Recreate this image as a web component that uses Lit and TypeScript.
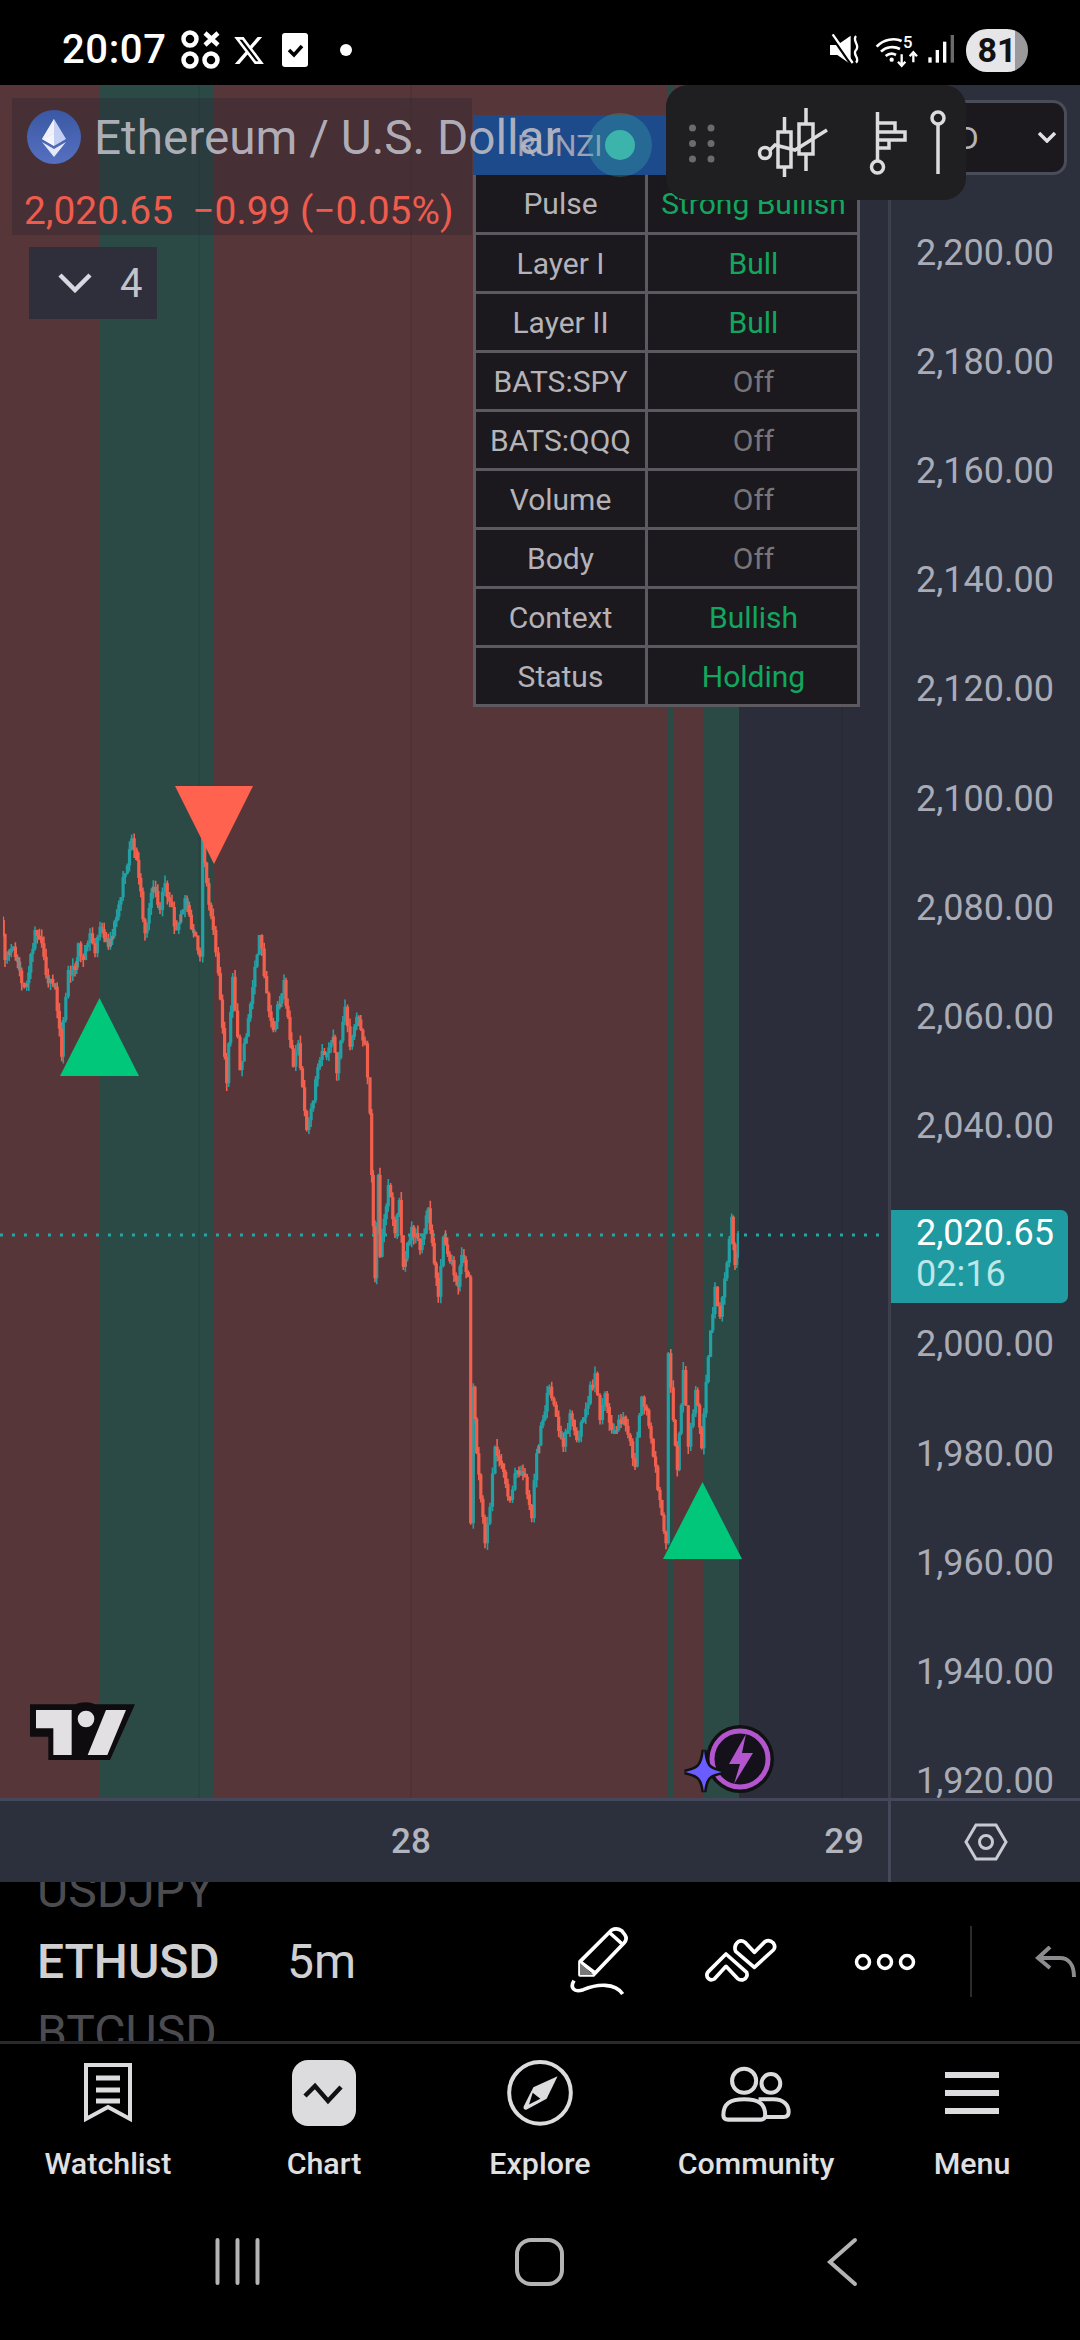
import { LitElement, html, css } from "lit";
import { customElement } from "lit/decorators.js";

const Z4: number[][] = [[5,420],[15,540],[40,500],[65,610],[80,610],[105,450],[125,490],[145,610],[165,620],[185,830],[190,720],[205,570],[225,570],[235,490],[250,540],[270,460],[285,520],[300,440],[325,500],[350,410],[395,175],[410,240],[435,460],[460,320],[480,390],[495,310],[530,450],[555,355],[600,530],[608,160],[620,310],[640,450],[655,580],[680,910],[698,590],[720,870],[745,715],[778,465],[800,640],[820,750],[852,600],[870,780],[880,860],[895,790],[920,1050],[960,840],[1000,770],[1010,880],[1035,680],[1050,800],[1070,710],[1095,790],[1110,1000]];
const Z5: number[][] = [[95,165],[105,475],[115,165],[120,410],[145,195],[165,340],[178,240],[190,440],[215,320],[240,390],[265,265],[295,530],[310,350],[355,500],[365,405],[385,470],[392,1210],[400,800],[410,1000],[435,1270],[450,1160],[465,980],[510,1140],[525,1060],[555,1070],[575,1195],[590,1000],[628,800],[670,980],[690,880],[710,960],[765,760],[780,900],[795,820],[815,930],[850,890],[885,1040],[905,830],[920,870],[960,1140],[978,1270],[985,700],[1000,900],[1012,1050],[1030,750],[1045,980],[1067,810],[1085,985],[1105,710],[1125,500],[1140,590],[1175,290],[1185,435],[1195,340]];

const POINTS = [
  ...Z4.map(([x, y]) => [x / 3, 780 + y / 3 - 86]),
  ...Z5.map(([x, y]) => [340 + x / 3, 1120 + y / 3 - 86]),
];

function buildCandles() {
  let seed = 11;
  const rnd = () => ((seed = (seed * 16807) % 2147483647) / 2147483647);
  const d = { upW: "", upB: "", dnW: "", dnB: "", gr: "" };
  let prev = POINTS[0][1];
  for (let i = 1; i < POINTS.length; i++) {
    const [x0, y0] = POINTS[i - 1];
    const [x1, y1] = POINTS[i];
    const n = Math.max(1, Math.round((x1 - x0) / 2.2));
    for (let k = 1; k <= n; k++) {
      const x = +(x0 + ((x1 - x0) * k) / n).toFixed(1);
      const c = y0 + ((y1 - y0) * k) / n + (k === n ? 0 : (rnd() - 0.5) * 12);
      const top = Math.min(prev, c);
      const bot = Math.max(prev, c);
      const hi = (top - rnd() * 8).toFixed(1);
      const lo = (bot + rnd() * 8).toFixed(1);
      const up = c < prev;
      const body = `M${x} ${top.toFixed(1)}V${Math.max(bot, top + 4).toFixed(1)}`;
      const wick = `M${x} ${hi}V${lo}`;
      if (up) d.upW += wick;
      else d.dnW += wick;
      if (bot - top < 9 && rnd() < 0.3) d.gr += body;
      else if (up) d.upB += body;
      else d.dnB += body;
      prev = c;
    }
  }
  return d;
}
const CANDLES = buildCandles();

const PRICES = ["2,200.00","2,180.00","2,160.00","2,140.00","2,120.00","2,100.00","2,080.00","2,060.00","2,040.00","","2,000.00","1,980.00","1,960.00","1,940.00","1,920.00"];
const ROWS: [string, string, string][] = [
  ["Pulse", "Strong Bullish", "good"],
  ["Layer I", "Bull", "good"],
  ["Layer II", "Bull", "good"],
  ["BATS:SPY", "Off", "off"],
  ["BATS:QQQ", "Off", "off"],
  ["Volume", "Off", "off"],
  ["Body", "Off", "off"],
  ["Context", "Bullish", "good"],
  ["Status", "Holding", "good"],
];

@customElement("app-root")
export class AppRoot extends LitElement {
  static styles = css`
    :host { display: block; width: 1080px; height: 2340px; background: #000; overflow: hidden; font-family: Roboto, "Liberation Sans", sans-serif; color: #dcdbde; }
    svg { display: block; flex: none; }
    .status { height: 85px; display: flex; align-items: center; padding: 15px 52px 0 62px; box-sizing: border-box; }
    .time { font-size: 40px; font-weight: 500; color: #fff; letter-spacing: 0.6px; width: 108px; margin-right: 11px; position: relative; top: -1px; }
    .m1 { margin-left: 11px; }
    .m2 { margin-left: 16px; }
    .m3 { margin-left: 32px; }
    .spacer { flex: 1; }
    .sysicons { margin-top: 5px; }
    .batt { width: 62px; height: 43px; border-radius: 21px; margin-left: 9px; background: linear-gradient(90deg, #e6e5e8 79%, #9a999c 79%); color: #111; font-size: 34px; font-weight: 700; display: flex; align-items: center; justify-content: center; }
    .main { height: 1713px; display: flex; position: relative; }
    .pane { width: 888px; position: relative; overflow: hidden; background: #2b2e3a; }
    .axis { width: 192px; box-sizing: border-box; border-left: 3px solid #3d3f4d; background: #2c2f3c; padding: 113px 0 0 25px; overflow: hidden; }
    .tick { height: 109.2px; display: flex; align-items: center; font-size: 36px; color: #a9abb6; }
    .legend { position: absolute; left: 12px; top: 13px; width: 460px; height: 137px; background: rgba(40, 34, 46, 0.34); }
    .title { position: absolute; left: 94px; top: 26px; z-index: 3; font-size: 47.700px; line-height: 54px; color: rgba(186, 186, 196, 0.92); white-space: nowrap; }
    .eth { position: absolute; left: 27px; top: 25px; z-index: 3; }
    .quote { position: absolute; left: 24px; top: 103px; z-index: 3; font-size: 38.900px; line-height: 46px; color: #ee5c4e; white-space: pre; }
    .fold { position: absolute; left: 29px; top: 162px; width: 128px; height: 72px; background: #2f2f3c; display: flex; align-items: center; padding-left: 29px; box-sizing: border-box; gap: 28px; font-size: 40px; color: #c2c3cc; }
    .table { position: absolute; left: 473px; top: 30px; width: 387px; box-sizing: border-box; border: 3px solid #5c5a60; border-top: none; background: #1b191d; font-size: 30px; }
    .thead { height: 60px; margin: 0 -3px; background: #1c4a8a; display: flex; align-items: center; padding-left: 44px; gap: 3px; color: #9da3b4; font-size: 30px; position: relative; }
    .dot { width: 30px; height: 30px; border-radius: 50%; background: #3cb4ac; box-shadow: 0 0 0 17px rgba(60, 180, 172, 0.3); }
    .row { height: 59px; box-sizing: border-box; border-top: 3px solid #5c5a60; display: grid; grid-template-columns: 169px 1fr; align-items: center; text-align: center; color: #b5b3b8; }
    .row.first { border-top: none; height: 57px; }
    .val { border-left: 3px solid #5c5a60; height: 100%; display: flex; align-items: center; justify-content: center; padding-left: 2px; }
    .good { color: #12a75f; }
    .off { color: #77757a; }
    .float { position: absolute; left: 666px; top: 0; width: 300px; height: 115px; border-radius: 22px; background: #1f1e21; z-index: 5; }
    .unit { position: absolute; left: 888px; top: 15px; width: 179px; height: 75px; box-sizing: border-box; background: #1b191d; border: 3px solid #4b4c59; border-radius: 14px; display: flex; align-items: center; padding-left: 27px; gap: 59px; font-size: 32px; color: #b5b3b8; z-index: 4; }
    .last { position: absolute; left: 891px; top: 1125px; width: 177px; height: 93px; box-sizing: border-box; background: #1f9aa0; border-radius: 0 7px 7px 0; padding: 3px 0 0 25px; font-size: 36px; line-height: 41px; color: #fff; z-index: 4; }
    .last span { display: block; color: #bfe6e6; }
    .mark { position: absolute; left: 0; top: 0; }
    .timebar { height: 84px; display: flex; border-top: 3px solid #45475a; box-sizing: border-box; background: #2c2f3c; }
    .dates { width: 888px; box-sizing: border-box; display: flex; justify-content: space-between; align-items: center; padding: 0 24px 0 391px; font-size: 35px; font-weight: 500; color: #b2b5be; }
    .gear { flex: 1; border-left: 3px solid #45475a; display: flex; align-items: center; padding-left: 73px; }
    .tools { height: 159px; display: flex; align-items: center; border-bottom: 3px solid #2a2a2e; box-sizing: content-box; overflow: hidden; }
    .pick { width: 250px; padding-left: 37px; height: 159px; overflow: hidden; display: flex; flex-direction: column; justify-content: center; font-size: 48px; font-weight: 500; color: #d0d0d2; flex: none; box-sizing: content-box; }
    .pick div { height: 71px; line-height: 71px; flex: none; }
    .pick .faded { color: #4c4c50; font-weight: 400; }
    .res { width: 273px; font-size: 48px; color: #d0d0d2; font-weight: 400; flex: none; }
    .t3 { margin-left: 54px; }
    .t4 { margin-left: 54px; }
    .t5 { margin-left: 63px; }
    .nav { height: 147px; display: grid; grid-template-columns: repeat(5, 216px); }
    .tab { display: flex; flex-direction: column; align-items: center; height: 147px; font-size: 30.400px; font-weight: 500; color: #e0e0e3; }
    .ico { height: 102px; padding-bottom: 4px; box-sizing: border-box; flex: none; display: flex; align-items: center; justify-content: center; }
    .sys { height: 149px; display: flex; align-items: center; padding-bottom: 8px; box-sizing: border-box; }
  `;

  private chart() {
    return html`<svg class="mark" width="888" height="1713" viewBox="0 -1 888 1713">
      <defs><filter id="soft" x="0" y="0" width="1" height="1"><feGaussianBlur stdDeviation="0.5"/></filter></defs>
      <rect x="0" y="-1" width="100" height="1714" fill="#563639"/>
      <rect x="100" y="-1" width="114" height="1714" fill="#2b4a46"/>
      <rect x="214" y="-1" width="454" height="1714" fill="#563639"/>
      <rect x="668" y="-1" width="5" height="1714" fill="#2b4a46"/>
      <rect x="673" y="-1" width="30" height="1714" fill="#563639"/>
      <rect x="703" y="-1" width="36" height="1714" fill="#2b4a46"/>
      <path d="M411 0V1713M842 0V1713M199 0V1713" stroke="#000" stroke-opacity=".06" stroke-width="2"/>
      <path d="M0 1149H880" stroke="#27a3a3" stroke-width="3" stroke-dasharray="3 9"/>
      <g fill="none" filter="url(#soft)">
        <path d=${CANDLES.upW} stroke="#22a0a4" stroke-width="1.600"/>
        <path d=${CANDLES.dnW} stroke="#f2604e" stroke-width="1.600"/>
        <path d=${CANDLES.gr} stroke="#90807e" stroke-width="3.200"/>
        <path d=${CANDLES.upB} stroke="#22a0a4" stroke-width="3.200"/>
        <path d=${CANDLES.dnB} stroke="#f2604e" stroke-width="3.200"/>
      </g>
      <path d="M175 700H253L214 778Z" fill="#ff6350"/>
      <path d="M60 990H139L99.500 912Z" fill="#00c77a"/>
      <path d="M663 1473H742L702.500 1396Z" fill="#00c77a"/>
      <svg x="20" y="1609" width="130" height="75" viewBox="0 0 390 225">
        <path d="M30 28H165C185 20 210 20 225 28H345L270 195H85V125H30Z" fill="#0e0c0e"/>
        <path d="M48 45H155V180H100V100H48Z" fill="#e2e0e3"/>
        <circle cx="198" cy="72" r="25" fill="#e2e0e3"/>
        <path d="M258 45H318L262 180H203Z" fill="#e2e0e3"/>
      </svg>
      <circle cx="740" cy="1673" r="34" fill="#111"/>
      <circle cx="740" cy="1673" r="28" fill="#14111a" stroke="#b455d0" stroke-width="5"/>
      <path d="M746 1648L729 1678H740L734 1698L753 1667H742Z" fill="#b455d0"/>
      <path d="M704 1664C706 1680 708 1683 722 1686C708 1689 706 1692 704 1706C702 1692 699 1689 685 1686C699 1683 702 1680 704 1664Z" fill="#6a5cff" stroke="#111" stroke-width="5" paint-order="stroke"/>
    </svg>`;
  }

  private floating() {
    return html`<div class="float"><svg width="300" height="115" viewBox="666 85 300 115" fill="none" stroke="#dcdbde" stroke-width="3.500">
      <g fill="#6b6a6d" stroke="none"><circle cx="692.500" cy="128" r="3.500"/><circle cx="711" cy="128" r="3.500"/><circle cx="692.500" cy="143.500" r="3.500"/><circle cx="711" cy="143.500" r="3.500"/><circle cx="692.500" cy="159" r="3.500"/><circle cx="711" cy="159" r="3.500"/></g>
      <rect x="778" y="132" width="13" height="35"/><path d="M784.500 117V132M784.500 167V177"/>
      <rect x="799" y="124" width="14" height="30"/><path d="M806 108V124M806 154V171"/>
      <circle cx="765" cy="153" r="5.500"/><path d="M770 150L775 145L795 150L827 130"/>
      <path d="M877.500 112V161"/><circle cx="877.500" cy="167" r="6"/>
      <path d="M878 123H895V132H878M895 132H905V140H878M889 140V148H878"/>
      <circle cx="938" cy="118" r="6"/><path d="M938 124V174"/>
    </svg></div>`;
  }

  private ethIcon() {
    return html`<svg class="eth" width="54" height="54" viewBox="0 0 54 54">
      <defs><linearGradient id="ethg" x1="0" y1="0" x2="0" y2="1"><stop offset="0" stop-color="#3a58a4"/><stop offset="1" stop-color="#5570c0"/></linearGradient></defs>
      <circle cx="27" cy="27" r="27" fill="url(#ethg)"/>
      <path d="M27 9L15 29L27 36L39 29Z" fill="#c5cff2"/>
      <path d="M27 9L15 29L27 24Z" fill="#eef1fb"/>
      <path d="M27 24L15 29L27 36Z" fill="#f4f5fc"/>
      <path d="M15 32L27 47L39 32L27 39Z" fill="#e4e8f8"/>
    </svg>`;
  }

  render() {
    return html`
      <div class="status">
        <span class="time">20:07</span>
        <svg width="40" height="40" viewBox="0 0 40 40" fill="none" stroke="#fff" stroke-width="4.500">
          <circle cx="9" cy="9" r="6.500"/><path d="M24 3L37 15M37 3L24 15"/><circle cx="9" cy="30" r="6.500"/><circle cx="30" cy="30" r="6.500"/>
        </svg>
        <svg class="m1" width="34" height="33" viewBox="0 0 24 24" fill="#fff"><path d="M18.244 2.25h3.308l-7.227 8.26 8.502 11.24H16.17l-5.214-6.817L4.99 21.75H1.68l7.73-8.835L1.254 2.25H8.08l4.713 6.231zm-1.161 17.52h1.833L7.084 4.126H5.117z"/></svg>
        <svg class="m2" width="26" height="34" viewBox="0 0 26 34"><rect width="26" height="34" rx="3" fill="#fff"/><path d="M7 17L12 22L20 13" stroke="#000" stroke-width="3.500" fill="none"/></svg>
        <svg class="m3" width="12" height="12" viewBox="0 0 12 12"><circle cx="6" cy="6" r="6" fill="#fff"/></svg>
        <div class="spacer"></div>
        <svg class="sysicons" width="137" height="55" viewBox="0 0 411 165" fill="none" stroke="#fff">
          <path d="M30 60H52L92 32V118L52 90H30Z" fill="#fff" stroke="none"/>
          <path d="M32 30L96 122" stroke="#000" stroke-width="8"/><path d="M38 28L98 114" stroke="#fff" stroke-width="7"/>
          <path d="M108 33C95 48 122 60 108 75C95 88 122 100 108 113" stroke-width="7"/>
          <g stroke-width="8"><path d="M170 65C190 42 225 38 245 48"/><path d="M183 80C198 65 222 62 240 72"/><path d="M197 93C207 85 218 84 228 90"/></g>
          <circle cx="215" cy="104" r="6.500" fill="#fff" stroke="none"/>
          <text x="249" y="70" font-size="50" font-family="Roboto" font-weight="500" fill="#fff" stroke="none">5</text>
          <path d="M245 88V122M234 110L245 122L256 110M280 112V82M269 94L280 82L291 94" stroke-width="7"/>
          <g stroke="none"><rect x="325" y="97" width="10" height="16" fill="#fff"/><rect x="347" y="75" width="10" height="38" fill="#fff"/><rect x="369" y="50" width="10" height="63" fill="#fff"/><rect x="392" y="30" width="10" height="83" fill="#6a6a6a"/></g>
        </svg>
        <div class="batt">81</div>
      </div>

      <div class="main">
        <div class="pane">${this.chart()}
          <div class="legend"></div>
          <div class="table">
            <div class="thead"><span>RUNZI</span><i class="dot"></i></div>
            ${ROWS.map(([k, v, c], i) => html`<div class="row ${i === 0 ? "first" : ""}"><span>${k}</span><span class="val ${c}">${v}</span></div>`)}
          </div>
          ${this.ethIcon()}
          <div class="title">Ethereum / U.S. Dollar</div>
          <div class="quote">2,020.65  −0.99 (−0.05%)</div>
          <div class="fold">
            <svg width="34" height="20" viewBox="0 0 34 20" fill="none" stroke="#d8d8e0" stroke-width="4.500"><path d="M2 2L17 17L32 2"/></svg>
            <span>4</span>
          </div>
        </div>
        <div class="axis">${PRICES.map((p) => html`<div class="tick">${p}</div>`)}</div>
        <div class="unit"><span>USD</span><svg width="18" height="11" viewBox="0 0 18 11" fill="none" stroke="#e0e0e4" stroke-width="3.500"><path d="M1 1L9 9L17 1"/></svg></div>
        ${this.floating()}
        <div class="last">2,020.65<span>02:16</span></div>
      </div>

      <div class="timebar">
        <div class="dates"><span>28</span><span>29</span></div>
        <div class="gear"><svg width="44" height="38" viewBox="0 0 44 38" fill="none" stroke="#c8cad2" stroke-width="3"><path d="M12 2H32L42 19L32 36H12L2 19Z"/><circle cx="22" cy="19" r="6.500"/></svg></div>
      </div>

      <div class="tools">
        <div class="pick"><div class="faded">USDJPY</div><div>ETHUSD</div><div class="faded">BTCUSD</div></div>
        <div class="res">5m</div>
        <svg width="240" height="85" viewBox="0 0 720 255" fill="none" stroke="#fff" stroke-width="11" stroke-linejoin="round">
          <path d="M60 128L155 33Q170 25 185 35L195 48Q203 60 192 72L100 168H60Z"/>
          <path d="M150 42L190 78M60 128L105 162"/>
          <path d="M60 132V168H100Z" fill="#777" stroke="none"/>
          <path d="M42 185C30 205 40 222 70 212C110 195 165 190 188 225"/>
          <path d="M445 158L498 105L560 160Q565 175 550 182Q540 185 532 178L498 142L463 180Q450 187 442 175Q438 165 445 158Z"/>
          <path d="M527 97Q520 80 535 68Q545 62 555 70L583 100L615 68Q628 60 640 72Q648 85 640 93L583 145Z"/>
        </svg>
        <svg class="t3" width="62" height="18" viewBox="0 0 62 18" fill="none" stroke="#fff" stroke-width="3.500"><circle cx="9" cy="9" r="6.500"/><circle cx="31" cy="9" r="6.500"/><circle cx="53" cy="9" r="6.500"/></svg>
        <svg class="t4" width="2" height="71" viewBox="0 0 2 71"><rect width="2" height="71" fill="#2b2b2f"/></svg>
        <svg class="t5" width="42" height="32" viewBox="0 0 42 32" fill="none" stroke="#8c8c8e" stroke-width="4"><path d="M15 1L3 12L15 22M3 12H25C33 12 39 18 39 31"/></svg>
      </div>

      <div class="nav">
        <div class="tab"><div class="ico"><svg width="48" height="60" viewBox="0 0 48 60" fill="none" stroke="#dcdbde" stroke-width="4"><path d="M2 2H46V56L24 44L2 56Z"/><path d="M12 15H36M12 27H36M12 38H36" stroke-width="5"/></svg></div>Watchlist</div>
        <div class="tab"><div class="ico"><svg width="66" height="66" viewBox="0 0 66 66"><rect x="1" y="0" width="64" height="66" rx="16" fill="#dcdbde"/><path d="M14 36L24 26L37 41L50 27" fill="none" stroke="#111" stroke-width="4.500"/></svg></div>Chart</div>
        <div class="tab"><div class="ico"><svg width="70" height="68" viewBox="70 20 210 205" fill="none" stroke="#dcdbde" stroke-width="12"><circle cx="175" cy="122" r="93"/><path d="M228 72L155 105L125 165Q125 175 135 172L195 140Z" fill="#dcdbde" stroke="none"/><path d="M153 122L176 140L142 157Z" fill="#000" stroke="none"/></svg></div>Explore</div>
        <div class="tab"><div class="ico"><svg width="72" height="57" viewBox="725 45 215 170" fill="none" stroke="#dcdbde" stroke-width="12"><circle cx="797" cy="92" r="36"/><circle cx="877" cy="100" r="28"/><path d="M735 195C735 160 755 147 797 147C840 147 860 160 860 195Q860 208 845 208H750Q735 208 735 195Z"/><path d="M840 147H885C915 147 930 165 930 185Q930 200 915 200H862"/></svg></div>Community</div>
        <div class="tab"><div class="ico"><svg width="54" height="42" viewBox="0 0 54 42" fill="#dcdbde"><rect y="0" width="54" height="6"/><rect y="18" width="54" height="6"/><rect y="36" width="54" height="6"/></svg></div>Menu</div>
      </div>

      <div class="sys">
        <svg width="1080" height="50" viewBox="0 0 1080 50" fill="none" stroke="#b4b4b4" stroke-width="4" stroke-linecap="round">
          <path d="M217.500 3V46M237.500 3V46M257.500 3V46"/>
          <rect x="517" y="3" width="45" height="44" rx="14"/>
          <path d="M855 3L830 25L855 47"/>
        </svg>
      </div>
    `;
  }
}
